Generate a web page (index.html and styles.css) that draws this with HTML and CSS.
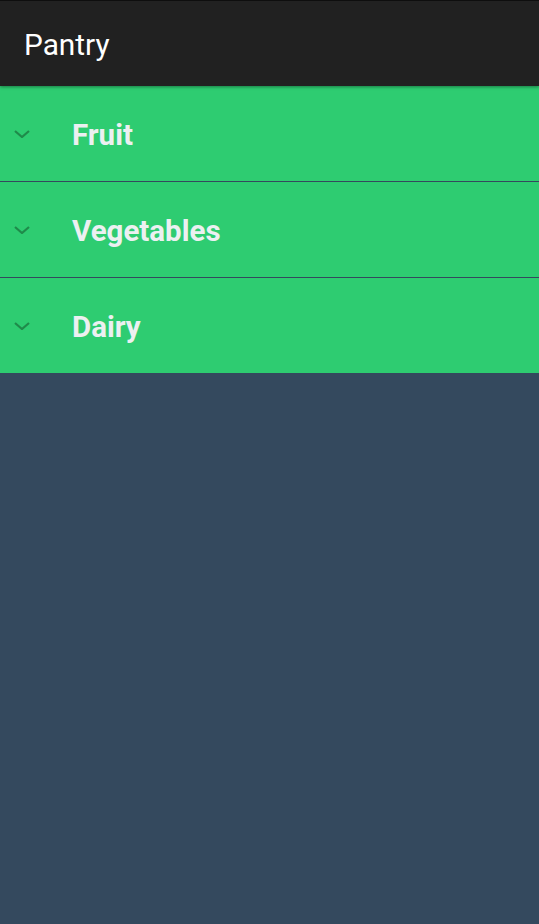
FILE: index.html
```html
<!DOCTYPE html>
<html>
<head>
<meta charset="utf-8">
<link rel="stylesheet" href="styles.css">
</head>
<body>
<div class="app">
  <header class="bar"><span class="title">Pantry</span></header>
  <ul class="list">
    <li class="row">
      <svg class="chev" viewBox="0 0 16 8" width="16" height="8"><path d="M1 1 L8 7 L15 1" fill="none" stroke="currentColor" stroke-width="2.2"/></svg>
      <span class="label">Fruit</span>
    </li>
    <li class="row">
      <svg class="chev" viewBox="0 0 16 8" width="16" height="8"><path d="M1 1 L8 7 L15 1" fill="none" stroke="currentColor" stroke-width="2.2"/></svg>
      <span class="label">Vegetables</span>
    </li>
    <li class="row">
      <svg class="chev" viewBox="0 0 16 8" width="16" height="8"><path d="M1 1 L8 7 L15 1" fill="none" stroke="currentColor" stroke-width="2.2"/></svg>
      <span class="label">Dairy</span>
    </li>
  </ul>
</div>
</body>
</html>
```
FILE: styles.css
```css
html, body {
  margin: 0;
  padding: 0;
  height: 100%;
  background: #34495e;
  font-family: Roboto, "Noto Sans", sans-serif;
}
.app {
  min-height: 100%;
  border-top: 1px solid #0f0f0f;
  box-sizing: border-box;
}
.bar {
  height: 85px;
  background: #212121;
  display: flex;
  align-items: center;
  padding-left: 24px;
  box-shadow: 0 1px 3px rgba(0,0,0,0.4);
  position: relative;
  z-index: 1;
}
.title {
  color: #ffffff;
  font-size: 29.8px;
  font-weight: 400;
  margin-top: 2px;
}
.list {
  list-style: none;
  margin: 0;
  padding: 0;
}
.row {
  height: 95px;
  background: #2ecc71;
  display: flex;
  align-items: center;
  border-bottom: 1px solid #34495e;
}
.row:last-child {
  border-bottom: none;
}
.chev {
  color: #1f8a4a;
  margin-left: 14px;
  width: 16px;
  flex: none;
}
.label {
  margin-left: 42px;
  margin-top: 2px;
  color: #ecf0f1;
  font-size: 29.5px;
  font-weight: 700;
}
```
